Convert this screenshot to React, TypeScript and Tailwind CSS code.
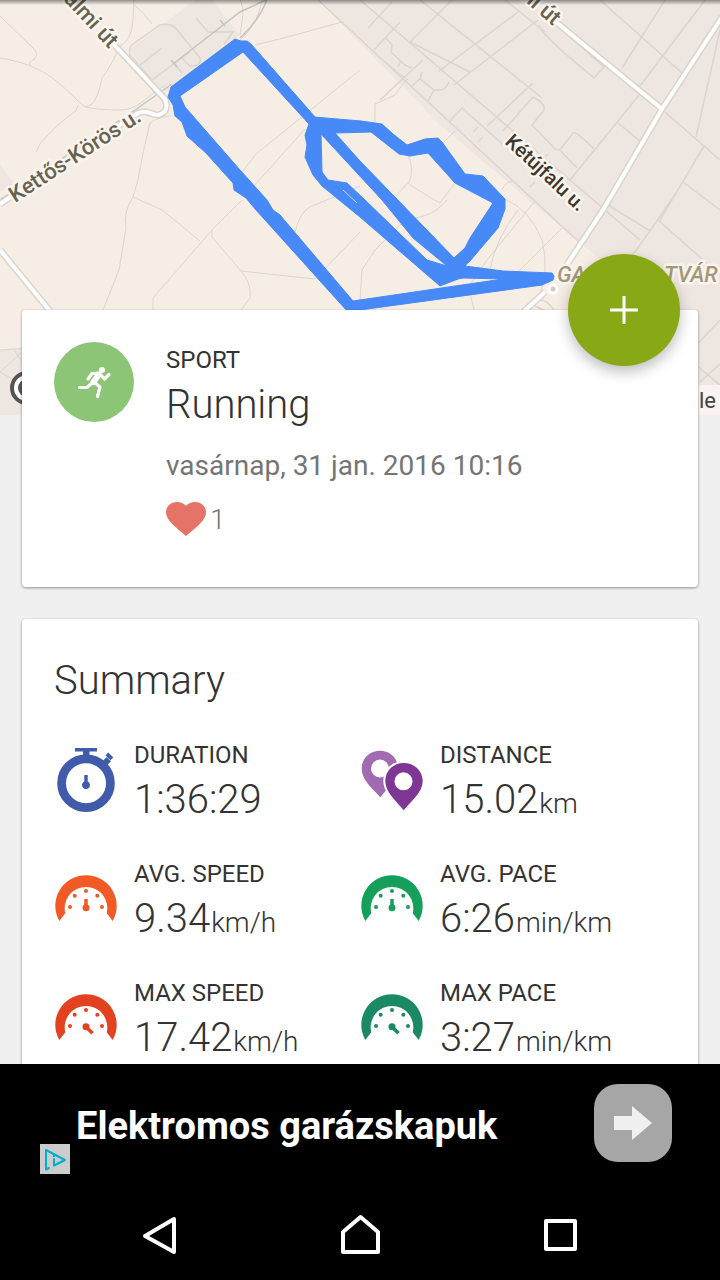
import React from "react";

const streets = [
  "M0 16L35 50Q40 57 30 62L30 66",
  "M0 58C50 66 60 86 85 107Q100 110 120 110C140 110 150 92 165 86",
  "M134 0L133 20Q132 40 119 47Q112 65 102 78Q98 98 92 104L85 107",
  "M78 105L76 111Q55 125 40 144L36 152",
  "M134 5Q144 12 152 24",
  "M240 0Q243 5 243 15L240 35",
  "M255 45Q285 38 320 28L342 22",
  "M262 0Q258 25 240 40",
  "M170 116Q156 118 150 123Q143 150 138 180L133 197Q123 212 126 228L119 270L103 310",
  "M133 197L162 210L200 241",
  "M360 70L256 154L240 175M305 129L254 186",
  "M242 200L212 230L153 298V310",
  "M212 230V237L241 271Q252 284 250 298L241 310",
  "M241 271L315 279L360 232",
  "M295 232Q300 212 310 207L360 186",
  "M375 54L408 80M375 122V104L395 95L405 81",
  "M408 155Q414 168 410 180L396 196M408 183Q420 192 440 203L455 183",
  "M455 131L440 146M502 190Q505 182 513 181L535 201L487 260L470 285",
  "M447 200C430 220 415 215 400 225L375 250L362 270L360 300",
  "M505 199Q530 210 542 240Q550 270 538 300",
  "M562 228L500 290M518 210Q495 240 490 270",
  "M469 288L474 310M0 350L70 345M14 350L50 400L0 372L30 345",
];

const blocks = [
  "M360 0L640 240M318 0L580 243",
  "M420 0L542 98M505 0L545 32",
  "M368 28L392 2M409 43L452 0M439 71L518 12M454 85L538 20M487 126L533 83M503 131L533 97",
  "M374 50L400 22M423 60L380 100M470 72L410 42",
  "M386 38L392 45L391 52L405 65L412 68M401 61L398 67",
  "M412 86L420 79L434 90Q445 92 449 82M422 72L420 79M434 90L428 101",
  "M533 97Q546 104 544 110L532 125L555 149L560 150L573 133Q576 131 594 149M560 150L577 168",
  "M449 122L462 108L516 156M478 127L473 132M483 137L478 142M548 154L542 160M535 182L530 187",
  "M539 25Q538 32 594 78L604 67L560 28M600 0L682 73",
  "M622 68L665 0M640 86L705 0",
  "M640 94L570 180M618 123L640 141L652 121M665 112L720 160",
  "M720 30L696 137M704 146L660 220M683 182L720 210M608 205L650 231L671 200",
  "M658 220L720 275M650 231L600 300M720 320L690 352M720 364L700 382M690 360L720 385",
  "M528 310Q540 290 554 310M535 306L565 320",
];

const track = [
  "M171 87L235 39L241 41L247 41L251 44L315 117L309 124L243 52L180 96L185 107L240 170L267 200L273 210L280 215L353 301L503 279L463 278L458 262L465 266L503 271L552 273L554 276L553 280L542 285L360 310L348 312L256 210L246 198L234 190L233 183L206 153L187 136L182 122L175 116L173 105L168 97Z",
  "M309 124L314 117L361 121L382 124L393 134L407 145L425 139L438 138L442 142L465 174L483 176L505 199L505 209L498 228L470 261L462 268L455 257L465 248L470 238L493 203L455 183L428 153L410 156L399 154L371 132L335 133L360 161L457 261L447 266L413 238L382 200L321 134L322 172L328 180L347 183L365 200L427 260L447 266L462 262L458 279L440 286L360 217L322 186L313 175L305 157L307 145L305 135Z",
  "M447 266L455 257L466 264L463 278L458 279L447 276Z",
];

const RouteMap = () => (
  <svg
    viewBox="0 0 720 415"
    preserveAspectRatio="xMidYMin slice"
    className="block h-[415px] w-full font-[Roboto,sans-serif]"
    role="img"
    aria-label="Route map"
  >
    <defs>
      <linearGradient id="topShade" x1="0" y1="0" x2="0" y2="1">
        <stop offset="0" stopColor="#000" stopOpacity="0.4" />
        <stop offset="1" stopColor="#000" stopOpacity="0" />
      </linearGradient>
    </defs>
    <rect width="720" height="415" fill="#f6eee5" />
    <path
      d="M318 0H720V415H690V330L580 243L440 125ZM0 350L70 345V415H0ZM0 164L14 184L0 192ZM129 50L195 0H212L240 35L168 92L152 81Z"
      fill="#eee6e0"
    />
    <path
      d="M152 80L130 55Q128 48 133 44L160 25Q172 22 178 31L200 58Q202 66 190 66L182 58M140 65L162 48M152 80L190 52M196 18L208 32L233 32L224 44M175 64L182 73"
      fill="none"
      stroke="#d9d6cd"
      strokeWidth="1.5"
    />
    <g fill="none" stroke="#d9d6d0" strokeWidth="1">
      {streets.map((d) => (
        <path key={d} d={d} />
      ))}
    </g>
    <g fill="none" stroke="#dbd5cd" strokeWidth="1.5">
      {blocks.map((d) => (
        <path key={d} d={d} />
      ))}
    </g>
    <path
      d="M0 200L135 110L172 84M173 64L240 12L266 0M267 0Q258 22 240 38M171 60L177 67M220 20L225 26"
      fill="none"
      stroke="#c4c4c4"
      strokeWidth="1.5"
    />
    {[
      { stroke: "#dad5cc", width: 7 },
      { stroke: "#fff", width: 4 },
    ].map((line) => (
      <path
        key={line.stroke}
        d="M105 35L165 99Q170 112 158 115C150 115 148 109 138 113L0 204M0 250L50 311M545 13L662 109M722 17L662 109L603 210L562 272M545 292L520 315"
        fill="none"
        stroke={line.stroke}
        strokeWidth={line.width}
      />
    ))}
    <circle cx="553" cy="289" r="4" fill="#d3cbc0" stroke="#fff" strokeWidth="3" />
    {track.map((d) => (
      <path key={d} d={d} fill="#4689f7" stroke="#4689f7" strokeLinejoin="round" />
    ))}
    <path d="M343 190L357 203" stroke="#c9d7f2" strokeWidth="1" />
    <g
      fill="#676350"
      stroke="#faf4ef"
      strokeWidth="5"
      strokeLinejoin="round"
      paintOrder="stroke"
      fontSize="22"
      fontWeight="500"
    >
      <text transform="translate(109 49) rotate(47)" textAnchor="end">
        almi út
      </text>
      <text transform="translate(553 26) rotate(41)" textAnchor="end">
        mi út
      </text>
      <text transform="translate(15 203) rotate(-33)">Kettős-Körös u.</text>
      <text transform="translate(504 143) rotate(43)" fontSize="20" fill="#3c382c">
        Kétújfalu u.
      </text>
      <g fill="#a3987b" fontStyle="italic">
        <text x="557" y="282">
          GA
        </text>
        <text x="664" y="282">
          TVÁR
        </text>
      </g>
    </g>
    <circle cx="27" cy="388" r="15" fill="#fff" stroke="#555" strokeWidth="4" />
    <circle cx="27" cy="388" r="9" fill="#555" />
    <rect x="640" y="385" width="80" height="30" fill="#fbf3f2" />
    <text x="716" y="408" textAnchor="end" fontSize="22" fill="#444">
      Google
    </text>
    <rect width="720" height="5" fill="url(#topShade)" />
  </svg>
);

const RunnerIcon = () => (
  <svg viewBox="0 0 80 80" className="size-20 shrink-0" aria-hidden="true">
    <circle cx="40" cy="40" r="40" fill="#8dc576" />
    <circle cx="48" cy="28" r="3" fill="#fff" />
    <g fill="none" stroke="#fff" strokeLinecap="round" strokeLinejoin="round">
      <path
        d="M34 37L38 31.500L45 31L50.500 37L55 32.500M39 40L33 45.500H25.500M40 40L46 45L43.500 54.500"
        strokeWidth="3.200"
      />
      <path d="M44.500 33L39.500 40" strokeWidth="6" />
    </g>
  </svg>
);

const StopwatchIcon = () => (
  <svg viewBox="0 0 64 64" className="size-16" aria-hidden="true">
    <g fill="#3f5ba9">
      <path d="M21 0H43V3.400H35.500V9H29V3.400H21Z" />
      <rect x="48" y="11" width="8" height="6" transform="rotate(-45 52 14)" />
      <rect x="53" y="5" width="4" height="7" transform="rotate(-45 55 8)" />
      <path d="M30.300 27H33.700V33.500A4 4 0 1 1 30.300 33.500Z" />
    </g>
    <circle cx="32" cy="35.200" r="24.400" fill="none" stroke="#3f5ba9" strokeWidth="8.800" />
  </svg>
);

const PinsIcon = () => (
  <svg viewBox="0 0 64 64" className="size-16" aria-hidden="true">
    <path
      fillRule="evenodd"
      fill="#a06bb0"
      d="M20 2.700C30 2.700 38 10 38 20.500C38 31 28 40 20.300 49.300C12 40 1.700 32 1.700 20.500C1.700 10 10 2.700 20 2.700ZM20 11.500A9 9 0 1 0 20 29.500A9 9 0 1 0 20 11.500Z"
    />
    <path
      fill="#7e3794"
      stroke="#fff"
      strokeWidth="4"
      paintOrder="stroke"
      d="M43.700 15C54 15 62.700 22.500 62.700 33C62.700 44 51.500 53 43.700 62.300C36 53 25.300 44 25.300 33C25.300 22.500 33.500 15 43.700 15Z"
    />
    <circle cx="43.500" cy="33.300" r="9" fill="#fff" />
  </svg>
);

const GaugeIcon = ({ color, max }: { color: string; max?: boolean }) => (
  <svg viewBox="0 0 64 64" className="size-16" fill={color} aria-hidden="true">
    <path d="M5.300 54A30.700 30.700 0 1 1 58.700 54L52.700 46.300A21.300 21.300 0 1 0 11.300 46.300Z" />
    <circle cx="32" cy="24" r="2" />
    <circle cx="20.700" cy="28.700" r="2" />
    <circle cx="43.300" cy="28.700" r="2" />
    <circle cx="16" cy="40" r="2" />
    <circle cx="48" cy="40" r="2" />
    <circle cx="32" cy="40.700" r="3.500" />
    <path
      d={max ? "M32 40.700L38.500 47.200" : "M32 40.700V32"}
      stroke={color}
      strokeWidth="3.500"
    />
  </svg>
);

interface Stat {
  label: string;
  value: string;
  unit?: string;
  icon: React.ReactNode;
}

const stats: Stat[] = [
  { label: "DURATION", value: "1:36:29", icon: <StopwatchIcon /> },
  { label: "DISTANCE", value: "15.02", unit: "km", icon: <PinsIcon /> },
  { label: "AVG. SPEED", value: "9.34", unit: "km/h", icon: <GaugeIcon color="#f15a24" /> },
  { label: "AVG. PACE", value: "6:26", unit: "min/km", icon: <GaugeIcon color="#14a05a" /> },
  { label: "MAX SPEED", value: "17.42", unit: "km/h", icon: <GaugeIcon color="#e2421f" max /> },
  { label: "MAX PACE", value: "3:27", unit: "min/km", icon: <GaugeIcon color="#1b8a64" max /> },
];

const StatItem = ({ stat }: { stat: Stat }) => (
  <li className="flex gap-4">
    <div className="mt-[9px] shrink-0">{stat.icon}</div>
    <div className="whitespace-nowrap">
      <p className="text-[24px] leading-8">{stat.label}</p>
      <p className="mt-[5px] text-[40px] font-light leading-[48px]">
        {stat.value}
        {stat.unit && <span className="ml-px text-[28px] leading-none">{stat.unit}</span>}
      </p>
    </div>
  </li>
);

const AdBanner = () => (
  <aside className="relative flex h-[120px] shrink-0 items-start justify-between bg-black pl-[76px] pr-12 pt-5">
    <p className="pt-3 text-[38px] font-bold leading-[60px] text-white">Elektromos garázskapuk</p>
    <button
      aria-label="Open ad"
      className="flex size-[78px] items-center justify-center rounded-3xl bg-[#a6a6a6]"
    >
      <svg viewBox="0 0 38 34" className="h-[34px] w-[38px]" fill="#f0f0f0">
        <path d="M0 10H18V0L38 17L18 34V24H0Z" />
      </svg>
    </button>
    <button aria-label="AdChoices" className="absolute left-10 top-20 size-[30px] bg-[#ccc]">
      <svg viewBox="0 0 30 30" fill="none" stroke="#00aecd" strokeWidth="2" strokeLinejoin="round">
        <path d="M9 24L6 25.500V6L25 16L14 21.500V15" strokeLinecap="round" />
        <path d="M13 12H15" />
      </svg>
    </button>
  </aside>
);

const SystemNav = () => (
  <nav className="flex h-24 shrink-0 bg-black px-[60px]">
    {[
      { name: "Back", d: "M44 15V48L15 32Z" },
      { name: "Home", d: "M13 28L30.500 13L48 28V48H13Z" },
      { name: "Recent apps", d: "M16 17H45V45H16Z" },
    ].map(({ name, d }) => (
      <button key={name} aria-label={name} className="flex flex-1 items-center justify-center">
        <svg
          viewBox="0 0 60 60"
          className="mt-1 size-[60px]"
          fill="none"
          stroke="#fff"
          strokeWidth="4"
          strokeLinejoin="round"
        >
          <path d={d} />
        </svg>
      </button>
    ))}
  </nav>
);

const App = () => {
  return (
    <div className="flex h-screen flex-col bg-[#f0f0f0] font-[Roboto,sans-serif] text-[#333]">
      <main className="min-h-0 flex-1 overflow-hidden">
        <RouteMap />
        <div className="relative -mt-[105px] flex flex-col gap-8 px-[22px]">
          <section className="relative flex gap-8 rounded bg-white px-8 pb-[49px] pt-8 shadow-[0_1px_3px_rgba(0,0,0,0.4)]">
            <RunnerIcon />
            <div className="pt-[2px]">
              <p className="text-[24px] leading-8">SPORT</p>
              <h1 className="mt-[5px] text-[40px] font-light leading-[48px]">Running</h1>
              <p className="mt-[21px] text-[28px] leading-8 text-[#757575]">
                vasárnap, 31 jan. 2016 10:16
              </p>
              <button className="mt-5 flex h-9 gap-1 text-[28px] font-light leading-9 text-[#757575]">
                <svg
                  viewBox="2 3 20 18.350"
                  preserveAspectRatio="none"
                  className="h-[34px] w-10"
                  fill="#e57368"
                  aria-label="Likes"
                >
                  <path d="M12 21.350l-1.450-1.320C5.400 15.360 2 12.280 2 8.500 2 5.420 4.420 3 7.500 3c1.740 0 3.410.810 4.500 2.090C13.090 3.810 14.760 3 16.500 3 19.580 3 22 5.420 22 8.500c0 3.780-3.400 6.860-8.550 11.540L12 21.350z" />
                </svg>
                1
              </button>
            </div>
            <button
              aria-label="Add"
              className="absolute -top-14 right-[18px] flex size-28 items-center justify-center rounded-full bg-[#88a915] shadow-[0_6px_14px_rgba(0,0,0,0.25)]"
            >
              <svg viewBox="0 0 28 28" className="size-7" stroke="#fff" strokeWidth="3">
                <path d="M14 0V28M0 14H28" />
              </svg>
            </button>
          </section>
          <section className="rounded bg-white px-8 pb-8 pt-[38px] shadow-[0_1px_3px_rgba(0,0,0,0.4)]">
            <h2 className="text-[40px] font-light leading-[48px]">Summary</h2>
            <ul className="mt-[34px] grid grid-cols-2 gap-y-[34px]">
              {stats.map((stat) => (
                <StatItem key={stat.label} stat={stat} />
              ))}
            </ul>
          </section>
        </div>
      </main>
      <AdBanner />
      <SystemNav />
    </div>
  );
};

export default App;
